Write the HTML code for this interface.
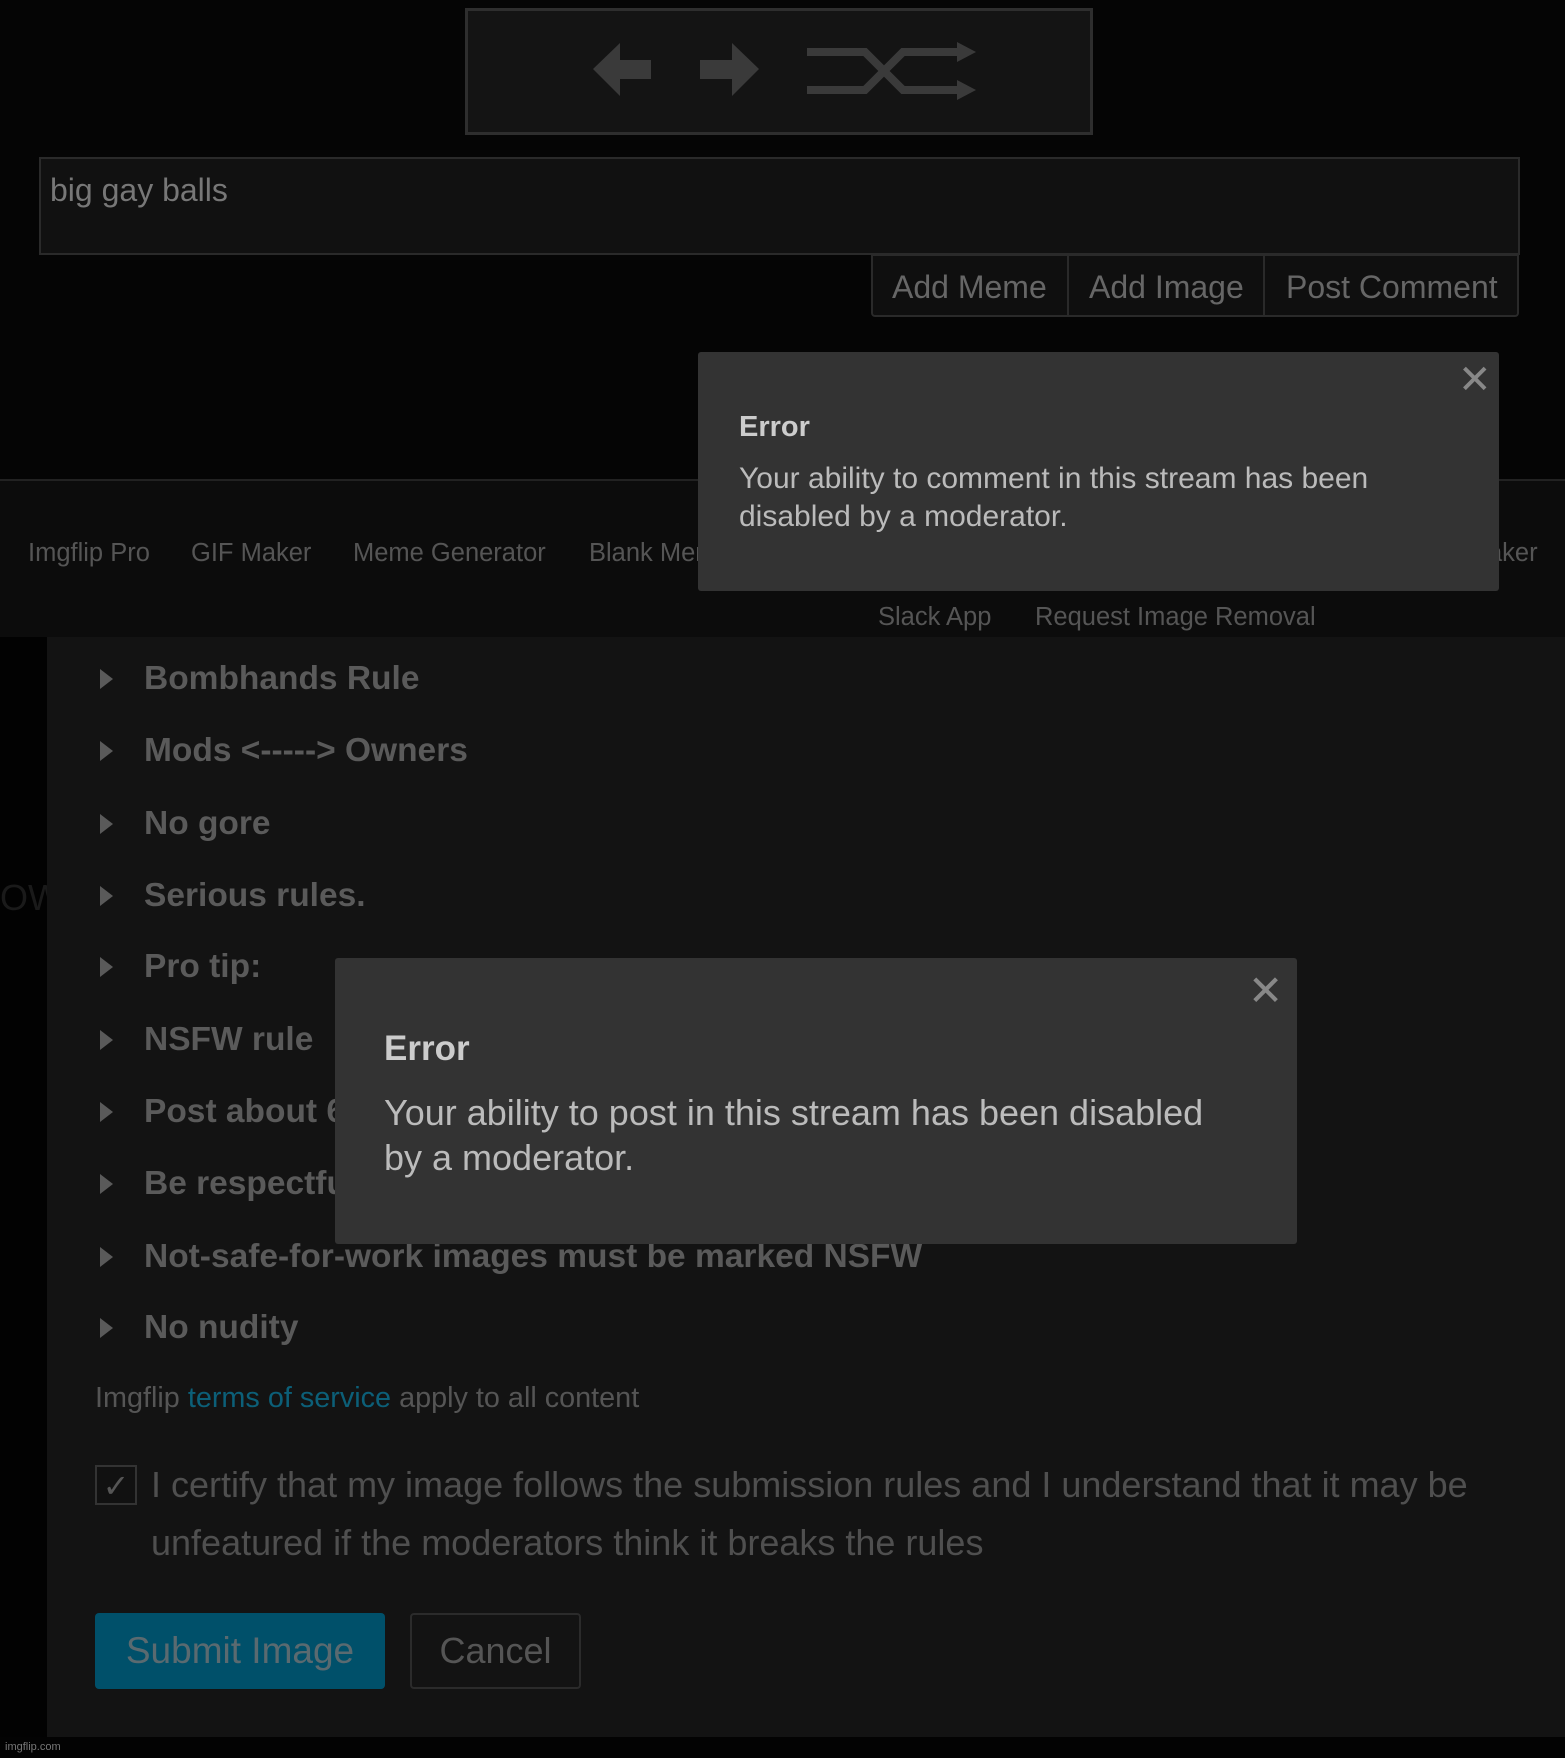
<!DOCTYPE html>
<html><head><meta charset="utf-8"><style>
*{margin:0;padding:0;box-sizing:border-box}
body{width:1565px;height:1758px;background:#050505;position:relative;overflow:hidden;font-family:"Liberation Sans",Arial,sans-serif}
.a{position:absolute;white-space:nowrap}
.t{line-height:1}
.r{position:absolute;left:144px;font-size:33.5px;font-weight:bold;color:#5a5a5a;line-height:40px;white-space:nowrap}
.tri{position:absolute;left:100px;width:0;height:0;border-top:10px solid transparent;border-bottom:10px solid transparent;border-left:13px solid #5a5a5a}
</style></head><body>
<div class="a" style="left:465px;top:8px;width:628px;height:127px;background:#141414;border:3px solid #2e2e2e"></div>
<svg class="a" style="left:0;top:0" width="1565" height="140">
<g fill="#3a3a3a">
<polygon points="593,69 620,43 620,60 651,60 651,79 620,79 620,96"/>
<polygon points="759,69 732,43 732,60 700,60 700,79 732,79 732,96"/>
</g>
<g fill="none" stroke="#3a3a3a" stroke-width="8">
<polyline points="807,52 865,52 903,90 960,90"/>
<polyline points="807,90 865,90 903,52 960,52"/>
</g>
<g fill="#3a3a3a"><polygon points="957,42 976,52 957,62"/><polygon points="957,80 976,90 957,100"/></g>
</svg>
<div class="a" style="left:39px;top:157px;width:1481px;height:98px;background:#111;border:2px solid #2a2a2a"></div>
<div class="a t" style="left:50px;top:174px;font-size:32px;color:#777">big gay balls</div>
<div class="a" style="left:871px;top:254px;width:648px;height:63px;background:#0f0f0f;border:2px solid #2a2a2a;border-radius:0 0 4px 4px"></div>
<div class="a" style="left:1067px;top:254px;width:2px;height:63px;background:#2a2a2a"></div>
<div class="a" style="left:1263px;top:254px;width:2px;height:63px;background:#2a2a2a"></div>
<div class="a t" style="left:892px;top:271px;font-size:32px;color:#666">Add Meme</div>
<div class="a t" style="left:1089px;top:271px;font-size:32px;color:#666">Add Image</div>
<div class="a t" style="left:1286px;top:271px;font-size:32px;color:#666">Post Comment</div>
<div class="a" style="left:0;top:479px;width:1565px;height:158px;background:#0c0c0c;border-top:2px solid #222"></div>
<div class="a t" style="left:28px;top:541px;font-size:25.5px;color:#555">Imgflip Pro</div>
<div class="a t" style="left:191px;top:541px;font-size:25.5px;color:#555">GIF Maker</div>
<div class="a t" style="left:353px;top:541px;font-size:25.5px;color:#555">Meme Generator</div>
<div class="a t" style="left:589px;top:541px;font-size:25.5px;color:#555">Blank Meme</div>
<div class="a t" style="left:1488px;top:541px;font-size:25.5px;color:#555">aker</div>
<div class="a t" style="left:878px;top:605px;font-size:25.5px;color:#555">Slack App</div>
<div class="a t" style="left:1035px;top:605px;font-size:25.5px;color:#555">Request Image Removal</div>
<div class="a" style="left:698px;top:352px;width:801px;height:239px;background:#333;border-radius:3px"></div>
<div class="a t" style="left:1458px;top:360px;font-size:40px;color:#888">✕</div>
<div class="a t" style="left:739px;top:413px;font-size:29px;font-weight:bold;color:#ccc">Error</div>
<div class="a" style="left:739px;top:460px;font-size:30px;line-height:38px;color:#bbb">Your ability to comment in this stream has been<br>disabled by a moderator.</div>
<div class="a" style="left:0;top:637px;width:47px;height:1121px;background:#020202"></div>
<div class="a t" style="left:0;top:880px;font-size:36px;color:#1a1a1a">OW</div>
<div class="a" style="left:47px;top:637px;width:1518px;height:1100px;background:#131313"></div>
<div class="a" style="left:0;top:1737px;width:1565px;height:21px;background:#030303"></div>
<div class="a t" style="left:5px;top:1742px;font-size:11px;color:#777">imgflip.com</div>

<div class="tri" style="top:669px"></div><div class="r" style="top:659px">Bombhands Rule</div>
<div class="tri" style="top:741px"></div><div class="r" style="top:731px">Mods &lt;-----&gt; Owners</div>
<div class="tri" style="top:814px"></div><div class="r" style="top:804px">No gore</div>
<div class="tri" style="top:886px"></div><div class="r" style="top:876px">Serious rules.</div>
<div class="tri" style="top:957px"></div><div class="r" style="top:947px">Pro tip:</div>
<div class="tri" style="top:1030px"></div><div class="r" style="top:1020px">NSFW rule</div>
<div class="tri" style="top:1102px"></div><div class="r" style="top:1092px">Post about 6</div>
<div class="tri" style="top:1174px"></div><div class="r" style="top:1164px">Be respectful</div>
<div class="tri" style="top:1247px"></div><div class="r" style="top:1237px">Not-safe-for-work images must be marked NSFW</div>
<div class="tri" style="top:1318px"></div><div class="r" style="top:1308px">No nudity</div>

<div class="a t" style="left:95px;top:1384px;font-size:28.8px;color:#555">Imgflip <span style="color:#0c5f78">terms of service</span> apply to all content</div>
<div class="a" style="left:95px;top:1465px;width:42px;height:40px;border:2px solid #333;background:#111;color:#555;font-size:32px;text-align:center;line-height:38px">✓</div>
<div class="a" style="left:151px;top:1456px;font-size:36px;line-height:58px;color:#4f4f4f">I certify that my image follows the submission rules and I understand that it may be<br>unfeatured if the moderators think it breaks the rules</div>
<div class="a" style="left:95px;top:1613px;width:290px;height:76px;background:#00506a;border-radius:4px;color:#5a6a70;font-size:37px;line-height:76px;text-align:center">Submit Image</div>
<div class="a" style="left:410px;top:1613px;width:171px;height:76px;border:2px solid #2b2b2b;border-radius:4px;color:#555;font-size:36px;line-height:72px;text-align:center">Cancel</div>
<div class="a" style="left:335px;top:958px;width:962px;height:286px;background:#333;border-radius:3px"></div>
<div class="a t" style="left:1248px;top:970px;font-size:42px;color:#888">✕</div>
<div class="a t" style="left:384px;top:1031px;font-size:35px;font-weight:bold;color:#ccc">Error</div>
<div class="a" style="left:384px;top:1090px;font-size:36px;line-height:45px;color:#bbb">Your ability to post in this stream has been disabled<br>by a moderator.</div>
</body></html>
